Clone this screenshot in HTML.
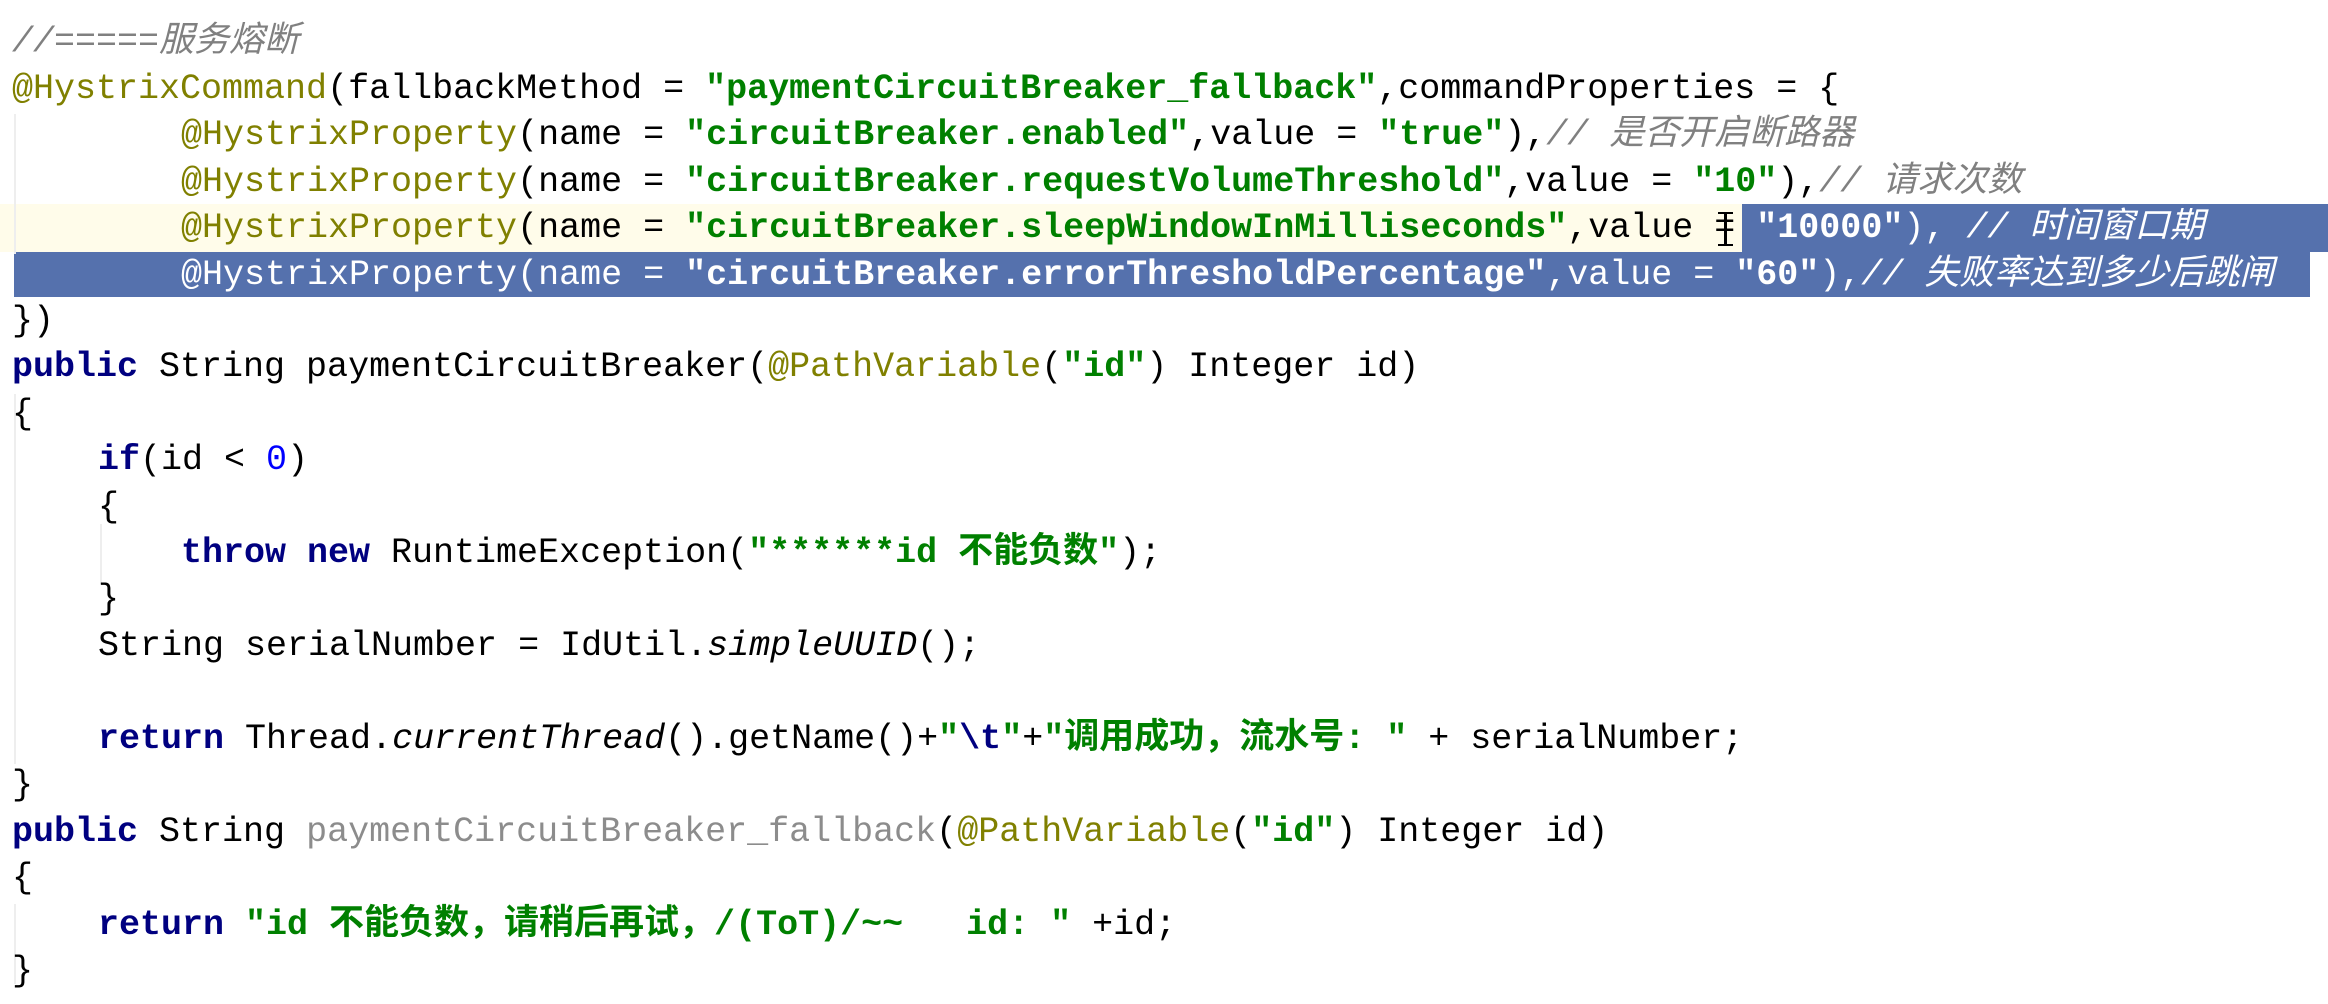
<!DOCTYPE html>
<html><head><meta charset="utf-8"><style>
html,body{margin:0;padding:0;background:#fff;width:2328px;height:1004px;overflow:hidden;position:relative}
#wr{position:absolute;left:0;top:4px;width:2328px;height:1000px}
.l{position:absolute;left:12px;height:46px;line-height:46px;white-space:pre;font-family:"Liberation Mono","Noto Sans CJK SC",monospace;font-size:35px;color:#000}
.c{color:#808080;font-style:italic}
.a{color:#808000}
.s{color:#008000;font-weight:bold}
.k{color:#000080;font-weight:bold}
.n{color:#0000ff}
.g{color:#8c8c8c}
.i{font-style:italic}
.sel{position:absolute;background:#5571ad}
.w,.w span{color:#fff}
.guide{position:absolute;width:2px;background:#eeeeee}
</style></head><body><div id="wr">
<div style="position:absolute;left:0;top:200px;width:1742px;height:48px;background:#fffcea"></div>
<div class="sel" style="left:1742px;top:200px;width:586px;height:48px"></div>
<div class="sel" style="left:14px;top:248px;width:2296px;height:45px"></div>
<div class="guide" style="left:14px;top:110px;height:140px"></div>
<div class="guide" style="left:14px;top:390px;height:370px"></div>
<div class="guide" style="left:100px;top:520px;height:60px"></div>
<div class="guide" style="left:14px;top:900px;height:80px"></div>

<div class="l c" style="top:15px">//=====服务熔断</div>
<div class="l" style="top:62px"><span class="a">@HystrixCommand</span>(fallbackMethod = <span class="s">"paymentCircuitBreaker_fallback"</span>,commandProperties = {</div>
<div class="l" style="top:108px;left:181px"><span class="a">@HystrixProperty</span>(name = <span class="s">"circuitBreaker.enabled"</span>,value = <span class="s">"true"</span>),<span class="c">// 是否开启断路器</span></div>
<div class="l" style="top:155px;left:181px"><span class="a">@HystrixProperty</span>(name = <span class="s">"circuitBreaker.requestVolumeThreshold"</span>,value = <span class="s">"10"</span>),<span class="c">// 请求次数</span></div>
<div class="l" style="top:201px;left:181px"><span class="a">@HystrixProperty</span>(name = <span class="s">"circuitBreaker.sleepWindowInMilliseconds"</span>,value =<span class="w"> <span style="font-weight:bold">"10000"</span>), <span class="i">// 时间窗口期</span></span></div>
<div style="position:absolute;left:1724px;top:208px;width:3px;height:34px;background:#000"></div>
<div style="position:absolute;left:1718px;top:208px;width:15px;height:2px;background:#000"></div>
<div style="position:absolute;left:1718px;top:240px;width:15px;height:2px;background:#000"></div>
<div class="l w" style="top:248px;left:181px"><span>@HystrixProperty</span>(name = <span style="font-weight:bold">"circuitBreaker.errorThresholdPercentage"</span>,value = <span style="font-weight:bold">"60"</span>),<span class="i">// 失败率达到多少后跳闸</span></div>
<div class="l" style="top:294px">})</div>
<div class="l" style="top:340px"><span class="k">public</span> String paymentCircuitBreaker(<span class="a">@PathVariable</span>(<span class="s">"id"</span>) Integer id)</div>
<div class="l" style="top:387px">{</div>
<div class="l" style="top:433px;left:98px"><span class="k">if</span>(id &lt; <span class="n">0</span>)</div>
<div class="l" style="top:480px;left:98px">{</div>
<div class="l" style="top:526px;left:181px"><span class="k">throw new</span> RuntimeException(<span class="s">"******id 不能负数"</span>);</div>
<div class="l" style="top:572px;left:98px">}</div>
<div class="l" style="top:619px;left:98px">String serialNumber = IdUtil.<span class="i">simpleUUID</span>();</div>
<div class="l" style="top:712px;left:98px"><span class="k">return</span> Thread.<span class="i">currentThread</span>().getName()+<span class="s">"</span><span class="k">\t</span><span class="s">"</span>+<span class="s">"调用成功，流水号: "</span> + serialNumber;</div>
<div class="l" style="top:758px">}</div>
<div class="l" style="top:805px"><span class="k">public</span> String <span class="g">paymentCircuitBreaker_fallback</span>(<span class="a">@PathVariable</span>(<span class="s">"id"</span>) Integer id)</div>
<div class="l" style="top:851px">{</div>
<div class="l" style="top:898px;left:98px"><span class="k">return</span> <span class="s">"id 不能负数，请稍后再试，/(ToT)/~~   id: "</span> +id;</div>
<div class="l" style="top:944px">}</div>
</div></body></html>
